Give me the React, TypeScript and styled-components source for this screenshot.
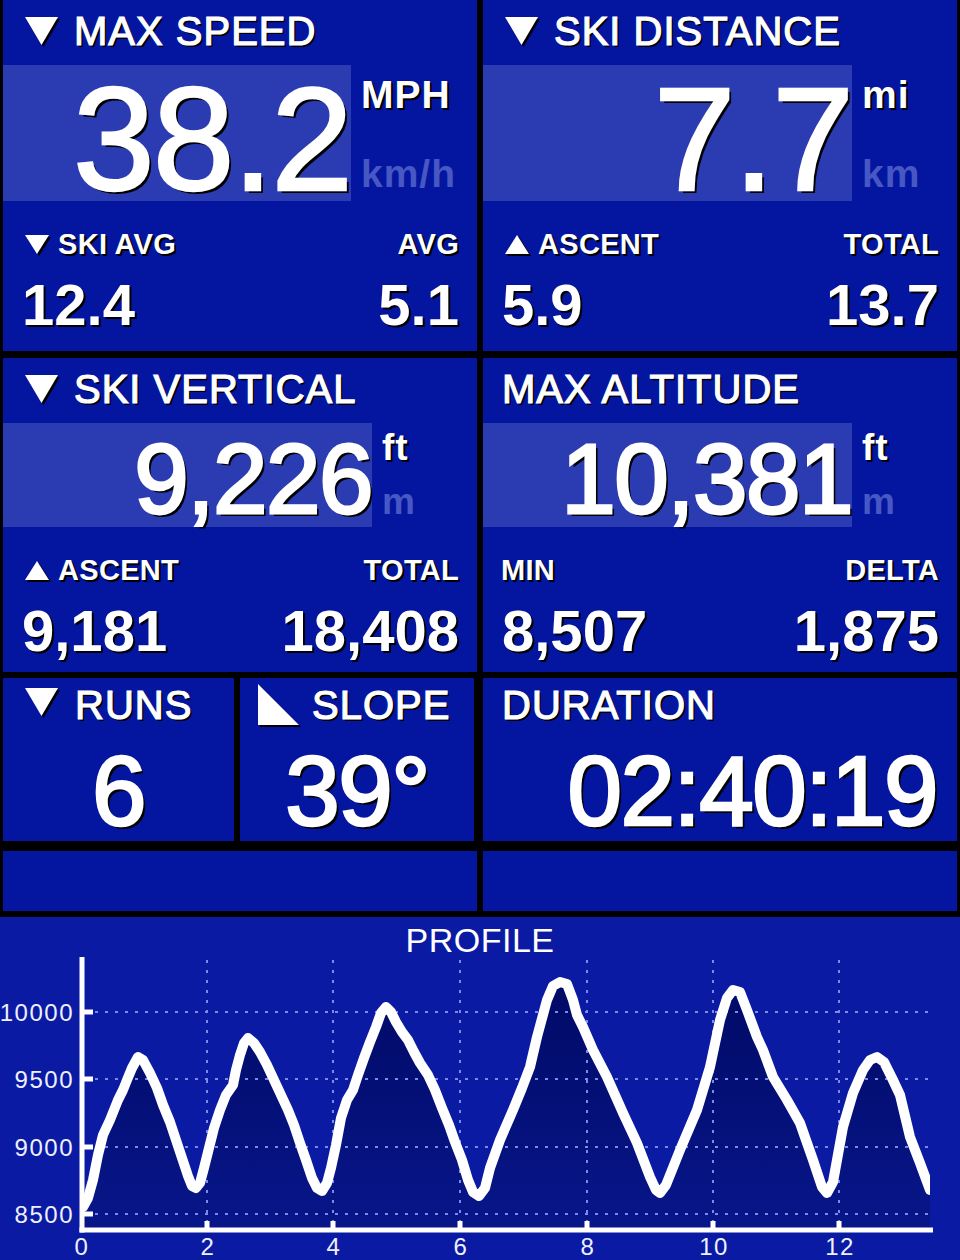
import { createGlobalStyle, styled } from 'styled-components';

const PANEL = '#0416a0';
const HILITE = '#2b3cb3';
const DIM = '#4757c4';
const CHART_BG = '#0a1aa3';
const CHART_TOP = 960;

const GlobalStyle = createGlobalStyle`
  html, body {
    margin: 0;
    padding: 0;
    background: #000;
  }
  body {
    font-family: "Liberation Sans", Arial, Helvetica, sans-serif;
    color: #fff;
  }
`;

type Shape = 'down' | 'up' | 'slope';

const shapePoints = (shape: Shape, w: number, h: number) => {
  if (shape === 'down') return `0,0 ${w},0 ${w / 2},${h}`;
  if (shape === 'up') return `${w / 2},0 ${w},${h} 0,${h}`;
  return `0,0 ${w},${h} 0,${h}`;
};

type GlyphProps = { shape: Shape; w: number; h: number; mt: number; ml?: number; mr: number };

const Glyph = ({ shape, w, h, mt, ml = 0, mr }: GlyphProps) => {
  const pts = shapePoints(shape, w, h);
  return (
    <GlyphSvg width={w + 2} height={h + 2} $mt={mt} $ml={ml} $mr={mr}>
      <polygon points={pts} transform="translate(2,2)" fill="#000" />
      <polygon points={pts} fill="#fff" />
    </GlyphSvg>
  );
};

type StatProps = {
  title: string;
  icon?: boolean;
  value: string;
  valueSize: number;
  valueTop: number;
  boxWidth: number;
  boxHeight: number;
  units: [string, string];
  unitSize: number;
  unitTop: number;
  unitGap: number;
  left: [string, Shape | null, string];
  right: [string, string];
};

const BigStat = (p: StatProps) => (
  <Panel>
    <Title $h={65} $lh={62} $pl={p.icon ? 22 : 19}>
      {p.icon && <Glyph shape="down" w={33} h={28} mt={17} mr={14} />}
      <TitleText>{p.title}</TitleText>
    </Title>
    <Readout $h={p.boxHeight}>
      <ValueBox $w={p.boxWidth}>
        <BigValue $fs={p.valueSize} $mt={p.valueTop}>
          {p.value}
        </BigValue>
      </ValueBox>
      <Units $fs={p.unitSize} $top={p.unitTop} $gap={p.unitGap}>
        <Unit>{p.units[0]}</Unit>
        <Unit $dim>{p.units[1]}</Unit>
      </Units>
    </Readout>
    <SubLabels>
      <LabelWrap>
        {p.left[1] && <Glyph shape={p.left[1]} w={24} h={19} mt={5} ml={4} mr={7} />}
        <span>{p.left[0]}</span>
      </LabelWrap>
      <span>{p.right[0]}</span>
    </SubLabels>
    <SubValues>
      <span>{p.left[2]}</span>
      <span>{p.right[1]}</span>
    </SubValues>
  </Panel>
);

// page coordinates of the profile line, taken off the graph
const PROFILE: [number, number][] = [
  [83, 1207], [88, 1198], [93, 1180], [98, 1155], [103, 1135], [110, 1120], [118, 1100],
  [123, 1090], [127, 1080], [132, 1068], [138, 1057], [143, 1060], [150, 1073], [157, 1088],
  [163, 1105], [170, 1122], [176, 1140], [182, 1158], [188, 1176], [192, 1186], [196, 1188],
  [200, 1183], [204, 1168], [209, 1148], [214, 1128], [220, 1110], [226, 1095], [233, 1085],
  [236, 1070], [240, 1055], [244, 1043], [248, 1038], [254, 1043], [260, 1052], [267, 1065],
  [274, 1080], [281, 1095], [288, 1110], [294, 1125], [300, 1143], [306, 1160], [312, 1178],
  [317, 1188], [322, 1191], [327, 1183], [331, 1168], [336, 1145], [341, 1118], [347, 1100],
  [353, 1090], [358, 1075], [364, 1058], [370, 1042], [376, 1027], [381, 1013], [386, 1007],
  [391, 1012], [396, 1022], [402, 1032], [408, 1040], [414, 1052], [420, 1063], [428, 1075],
  [435, 1090], [442, 1108], [449, 1125], [455, 1142], [462, 1160], [468, 1180], [473, 1192],
  [479, 1196], [485, 1188], [490, 1168], [500, 1140], [513, 1110], [522, 1088], [530, 1067],
  [537, 1037], [547, 1000], [553, 986], [560, 982], [567, 984], [573, 1000], [577, 1015],
  [583, 1027], [593, 1050], [607, 1077], [623, 1113], [637, 1143], [650, 1177], [656, 1190],
  [660, 1193], [666, 1185], [680, 1150], [697, 1110], [710, 1067], [720, 1020], [727, 998],
  [733, 990], [740, 992], [747, 1010], [757, 1037], [763, 1050], [773, 1077], [787, 1100],
  [800, 1123], [813, 1160], [822, 1187], [827, 1193], [833, 1182], [843, 1127], [853, 1093],
  [863, 1070], [870, 1060], [877, 1057], [884, 1062], [892, 1078], [900, 1095], [910, 1137],
  [920, 1163], [930, 1190],
];

const Y_TICKS: [string, number][] = [['10000', 52], ['9500', 119], ['9000', 187], ['8500', 254]];
const X_TICKS: [string, number][] = [['2', 207], ['4', 333], ['6', 460], ['8', 587], ['10', 713], ['12', 839]];
const AXIS_X = 82;
const AXIS_Y = 270;

const ProfileChart = () => {
  const line = PROFILE.map(([x, y]) => `${x},${y - CHART_TOP}`).join(' ');
  const area = `${line} 930,${AXIS_Y} ${AXIS_X},${AXIS_Y}`;
  return (
    <Chart>
      <ChartTitle>PROFILE</ChartTitle>
      <Plot width={960} height={300} viewBox="0 0 960 300">
        <defs>
          <linearGradient id="fill" x1="0" y1="0" x2="0" y2="1">
            <stop offset="0" stopColor="#010a66" />
            <stop offset="1" stopColor="#08168a" />
          </linearGradient>
          <clipPath id="plotClip">
            <rect x={AXIS_X} y={-10} width={930 - AXIS_X} height={AXIS_Y + 10} />
          </clipPath>
        </defs>
        <polygon points={area} fill="url(#fill)" />
        {Y_TICKS.map(([, y]) => (
          <line key={y} x1={95} y1={y} x2={932} y2={y} stroke="#7b8be6" strokeWidth={2} strokeDasharray="3 7" />
        ))}
        {X_TICKS.map(([, x]) => (
          <line key={x} x1={x} y1={0} x2={x} y2={262} stroke="#7b8be6" strokeWidth={2} strokeDasharray="3 7" />
        ))}
        <polyline
          points={line}
          fill="none"
          stroke="#fff"
          strokeWidth={10}
          strokeLinejoin="round"
          strokeLinecap="round"
          clipPath="url(#plotClip)"
        />
        <line x1={AXIS_X} y1={-3} x2={AXIS_X} y2={AXIS_Y + 2.5} stroke="#fff" strokeWidth={5} />
        <line x1={AXIS_X - 2.5} y1={AXIS_Y} x2={933} y2={AXIS_Y} stroke="#fff" strokeWidth={5} />
        {Y_TICKS.map(([label, y]) => (
          <g key={label}>
            <line x1={AXIS_X} y1={y} x2={93} y2={y} stroke="#fff" strokeWidth={5} />
            <AxisLabel x={74} y={y + 9} textAnchor="end">
              {label}
            </AxisLabel>
          </g>
        ))}
        <AxisLabel x={82} y={295} textAnchor="middle">
          0
        </AxisLabel>
        {X_TICKS.map(([label, x]) => (
          <g key={label}>
            <line x1={x} y1={261} x2={x} y2={AXIS_Y} stroke="#fff" strokeWidth={5} />
            <AxisLabel x={x + 1} y={295} textAnchor="middle">
              {label}
            </AxisLabel>
          </g>
        ))}
      </Plot>
    </Chart>
  );
};

const App = () => (
  <>
    <GlobalStyle />
    <Screen>
      <Row $h={351} $mt={0}>
        <BigStat
          title="MAX SPEED"
          icon
          value="38.2"
          valueSize={147}
          valueTop={1}
          boxWidth={348}
          boxHeight={136}
          units={['MPH', 'km/h']}
          unitSize={39}
          unitTop={10}
          unitGap={40}
          left={['SKI AVG', 'down', '12.4']}
          right={['AVG', '5.1']}
        />
        <BigStat
          title="SKI DISTANCE"
          icon
          value="7.7"
          valueSize={147}
          valueTop={1}
          boxWidth={369}
          boxHeight={136}
          units={['mi', 'km']}
          unitSize={39}
          unitTop={10}
          unitGap={40}
          left={['ASCENT', 'up', '5.9']}
          right={['TOTAL', '13.7']}
        />
      </Row>
      <Row $h={314} $mt={7}>
        <BigStat
          title="SKI VERTICAL"
          icon
          value="9,226"
          valueSize={98}
          valueTop={7}
          boxWidth={369}
          boxHeight={104}
          units={['ft', 'm']}
          unitSize={37}
          unitTop={6}
          unitGap={17}
          left={['ASCENT', 'up', '9,181']}
          right={['TOTAL', '18,408']}
        />
        <BigStat
          title="MAX ALTITUDE"
          value="10,381"
          valueSize={98}
          valueTop={7}
          boxWidth={369}
          boxHeight={104}
          units={['ft', 'm']}
          unitSize={37}
          unitTop={6}
          unitGap={17}
          left={['MIN', null, '8,507']}
          right={['DELTA', '1,875']}
        />
      </Row>
      <Row $h={163} $mt={6}>
        <Split>
          <Panel>
            <Title $h={54} $lh={54} $pl={22}>
              <Glyph shape="down" w={33} h={28} mt={10} mr={15} />
              <TitleText>RUNS</TitleText>
            </Title>
            <MidValue $align="center">6</MidValue>
          </Panel>
          <Panel>
            <Title $h={54} $lh={54} $pl={18}>
              <Glyph shape="slope" w={41} h={41} mt={6} mr={11} />
              <TitleText>SLOPE</TitleText>
            </Title>
            <MidValue $align="center">39°</MidValue>
          </Panel>
        </Split>
        <Panel>
          <Title $h={54} $lh={54} $pl={19}>
            <TitleText>DURATION</TitleText>
          </Title>
          <MidValue $align="right">02:40:19</MidValue>
        </Panel>
      </Row>
      <Row $h={60} $mt={10}>
        <Panel />
        <Panel />
      </Row>
      <ProfileChart />
    </Screen>
  </>
);

const Screen = styled.div`
  width: 960px;
  height: 1260px;
  background: #000;
  display: flex;
  flex-direction: column;
  overflow: hidden;
`;
const Row = styled.div<{ $h: number; $mt: number }>`
  flex-shrink: 0;
  height: ${(p) => p.$h}px;
  margin-top: ${(p) => p.$mt}px;
  padding: 0 3px;
  display: grid;
  grid-template-columns: 474px 474px;
  column-gap: 6px;
`;
const Split = styled.div`
  display: grid;
  grid-template-columns: 231px 234px;
  column-gap: 6px;
`;
const Panel = styled.section`
  background: ${PANEL};
  display: flex;
  flex-direction: column;
  min-width: 0;
`;
const Title = styled.div<{ $h: number; $lh: number; $pl: number }>`
  display: flex;
  align-items: flex-start;
  height: ${(p) => p.$h}px;
  line-height: ${(p) => p.$lh}px;
  padding-left: ${(p) => p.$pl}px;
  flex-shrink: 0;
`;
const TitleText = styled.span`
  font-size: 40px;
  letter-spacing: 1px;
  white-space: nowrap;
  -webkit-text-stroke: 1.2px #fff;
  text-shadow: 2px 2px 0 #000;
`;
const GlyphSvg = styled.svg<{ $mt: number; $ml: number; $mr: number }>`
  display: block;
  flex-shrink: 0;
  margin: ${(p) => p.$mt}px ${(p) => p.$mr}px 0 ${(p) => p.$ml}px;
`;
const Readout = styled.div<{ $h: number }>`
  display: flex;
  height: ${(p) => p.$h}px;
  flex-shrink: 0;
`;
const ValueBox = styled.div<{ $w: number }>`
  width: ${(p) => p.$w}px;
  height: 100%;
  background: ${HILITE};
  display: flex;
  justify-content: flex-end;
  flex-shrink: 0;
`;
const BigValue = styled.div<{ $fs: number; $mt: number }>`
  font-size: ${(p) => p.$fs}px;
  line-height: ${(p) => p.$fs}px;
  margin-top: ${(p) => p.$mt}px;
  letter-spacing: ${(p) => (p.$fs > 120 ? -2 : -1.5)}px;
  white-space: nowrap;
  -webkit-text-stroke: ${(p) => (p.$fs > 120 ? 2.4 : 2.8)}px #fff;
  text-shadow: 3px 3px 0 #000;
`;
const Units = styled.div<{ $fs: number; $top: number; $gap: number }>`
  display: flex;
  flex-direction: column;
  align-items: flex-start;
  gap: ${(p) => p.$gap}px;
  padding: ${(p) => p.$top}px 0 0 10px;
  font-size: ${(p) => p.$fs}px;
  line-height: ${(p) => p.$fs}px;
  font-weight: 700;
  letter-spacing: 1px;
`;
const Unit = styled.span<{ $dim?: boolean }>`
  color: ${(p) => (p.$dim ? DIM : '#fff')};
  text-shadow: ${(p) => (p.$dim ? 'none' : '2px 2px 0 #000')};
`;
const SubLabels = styled.div`
  display: flex;
  justify-content: space-between;
  align-items: flex-start;
  margin-top: 29px;
  padding: 0 18px;
  font-size: 29px;
  line-height: 29px;
  font-weight: 700;
  letter-spacing: 0.3px;
  text-shadow: 2px 2px 0 #000;
`;
const LabelWrap = styled.div`
  display: flex;
  align-items: flex-start;
`;
const SubValues = styled.div`
  display: flex;
  justify-content: space-between;
  margin-top: 17px;
  padding: 0 18px 0 19px;
  font-size: 58px;
  line-height: 58px;
  font-weight: 700;
  text-shadow: 2px 2px 0 #000;
`;
const MidValue = styled.div<{ $align: 'center' | 'right' }>`
  margin-top: 10px;
  padding: 0 ${(p) => (p.$align === 'right' ? 20 : 0)}px 0 0;
  text-align: ${(p) => p.$align};
  font-size: 98px;
  line-height: 98px;
  letter-spacing: -1.5px;
  white-space: nowrap;
  -webkit-text-stroke: 2.6px #fff;
  text-shadow: 3px 3px 0 #000;
`;
const Chart = styled.section`
  flex-shrink: 0;
  height: 343px;
  margin-top: 6px;
  background: ${CHART_BG};
  display: flex;
  flex-direction: column;
`;
const ChartTitle = styled.div`
  height: 43px;
  box-sizing: border-box;
  padding-top: 3px;
  font-size: 34px;
  line-height: 40px;
  text-align: center;
  letter-spacing: 0.5px;
`;
const Plot = styled.svg`
  display: block;
  overflow: visible;
`;
const AxisLabel = styled.text`
  font-family: "Liberation Sans", Arial, sans-serif;
  font-size: 24px;
  letter-spacing: 1.5px;
  fill: #eef0ff;
`;

export default App;
